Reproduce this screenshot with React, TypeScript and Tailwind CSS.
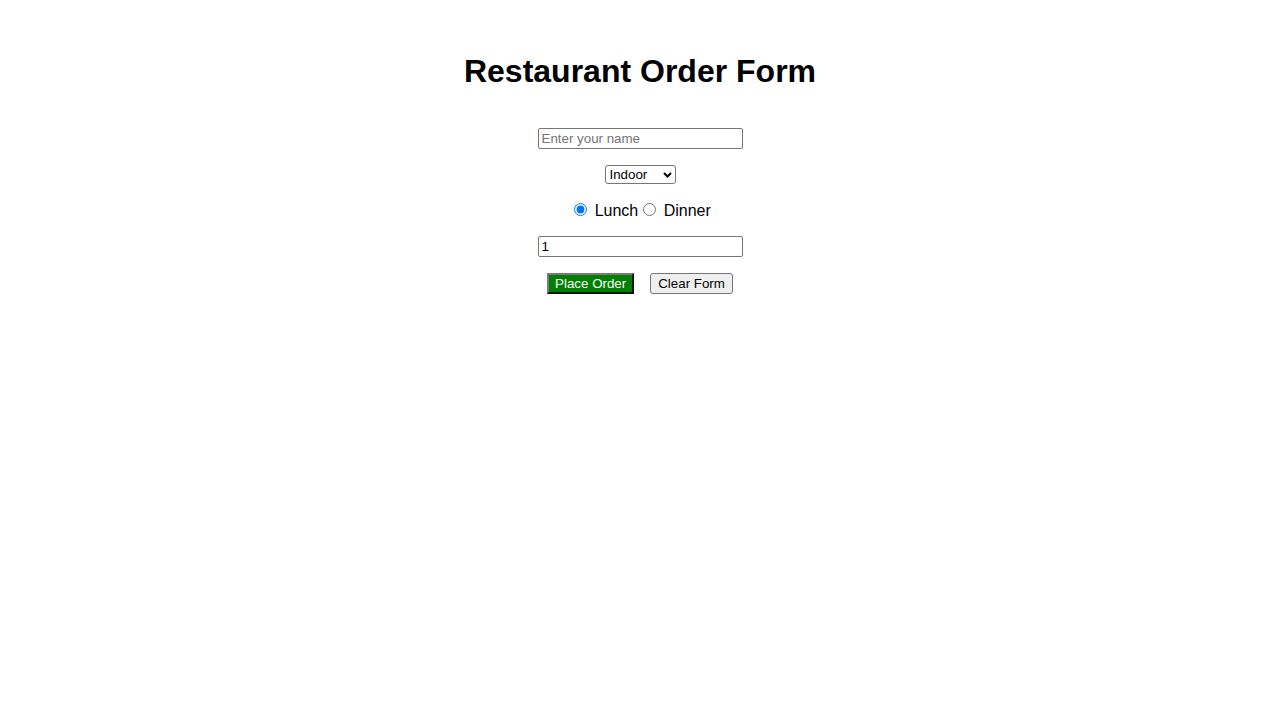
import React from "react";

export default function App() {
  return (
    <div className="min-h-[720px] w-full bg-white text-black font-['Liberation_Sans',Arial,sans-serif]">
      <div className="flex flex-col items-center pt-[53px]">
        <h1 className="text-[32px] leading-[37px] font-bold">Restaurant Order Form</h1>
        <form className="mt-[38px] flex flex-col items-center" onSubmit={(e) => e.preventDefault()}>
          <input
            type="text"
            placeholder="Enter your name"
            className="block w-[205px] h-[21px] border border-[#767676] rounded-[2px] px-[3px] text-[13.33px] leading-[15px] placeholder:text-[#757575] outline-none"
          />
          <div className="relative mt-[16px] h-[19px] w-[71px]">
            <select
              defaultValue="Indoor"
              className="block w-[71px] h-[19px] appearance-none border border-[#767676] rounded-[3px] bg-white pl-[4px] pr-[18px] text-[13.33px] leading-[15px] outline-none"
            >
              <option>Indoor</option>
              <option>Outdoor</option>
              <option>Takeaway</option>
            </select>
            <svg
              className="pointer-events-none absolute left-[58px] top-[7px]"
              width="9"
              height="6"
              viewBox="0 0 9 6"
            >
              <path d="M1 1 L4.5 4.5 L8 1" fill="none" stroke="#000" strokeWidth="2" />
            </svg>
          </div>
          <div className="mt-[16px] h-[20px] text-[16px] leading-[18px] whitespace-nowrap">
            <input type="radio" name="meal" defaultChecked className="m-[3px_3px_0_5px]" /> Lunch
            <input type="radio" name="meal" className="m-[3px_3px_0_5px]" /> Dinner
          </div>
          <input
            type="number"
            defaultValue={1}
            className="block mt-[16px] w-[205px] h-[21px] border border-[#767676] rounded-[2px] px-[3px] text-[13.33px] leading-[15px] outline-none"
          />
          <div className="mt-[16px] flex items-start gap-[16px]">
            <button
              type="submit"
              className="h-[21px] bg-[#008000] text-white text-[13.33px] leading-[15px] px-[6px] py-[1px] border-2 border-t-[#7a7a7a] border-l-[#7a7a7a] border-r-[#111] border-b-[#111]"
            >
              Place Order
            </button>
            <button
              type="reset"
              className="h-[21px] bg-[#efefef] text-black text-[13.33px] leading-[15px] px-[7px] py-[2px] border border-[#767676] rounded-[3px]"
            >
              Clear Form
            </button>
          </div>
        </form>
      </div>
    </div>
  );
}
